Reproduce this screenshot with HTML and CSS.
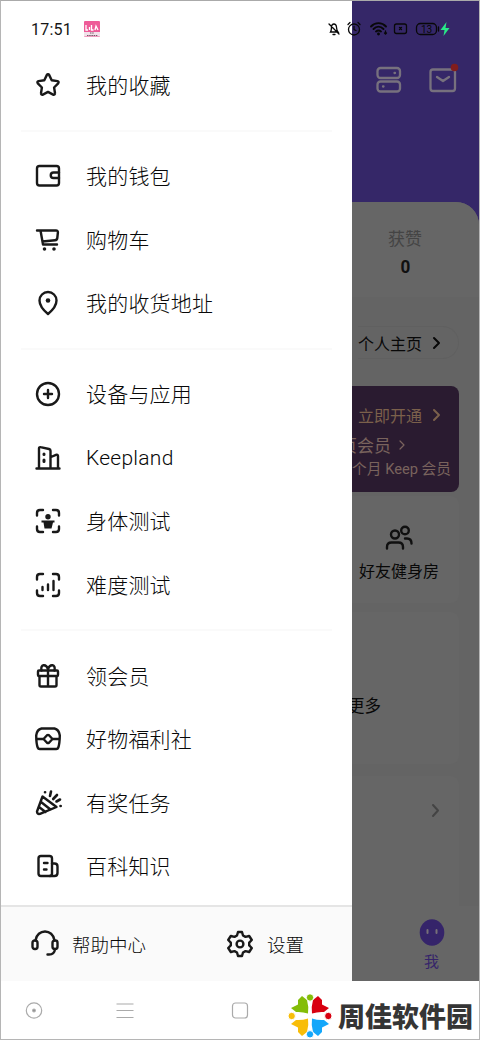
FILE: index.html
```html
<!DOCTYPE html>
<html lang="zh-CN">
<head>
<meta charset="utf-8">
<title>Keep</title>
<link rel="stylesheet" href="styles.css">
</head>
<body>
<div class="screen">
  <header class="status">
    <span class="clock">17:51</span>
    <svg class="app-badge" width="16" height="16" viewBox="0 0 16 16"><rect width="16" height="16" rx="1" fill="#ee5b98"/><path d="M0 11h16v4.500H0z" fill="#f1e1e9"/><path d="M2 4v5h2M5.500 6v3M7.500 4v5h2M11 9l1-4 2 4" fill="none" stroke="#fff" stroke-width="1.300"/><path d="M6 12h4M3 14.500h11" stroke="#765567" stroke-dasharray="1.500 .7"/></svg>
    <svg class="status-icons" width="128" height="18" viewBox="-2 0 128 18" fill="none" stroke="#080808" stroke-width="1.300" stroke-linecap="round">
      <path d="M1.500 12c1-1.500.8-3 1-5 .3-4 4.500-4 5 0 .2 2 .1 3.500 1.500 5zM0 4l10 10M4 14.500h2"/>
      <circle cx="25" cy="9.500" r="5.500"/><path d="M25 6.500v3l2 1M19 4.500l2-2M29 2.500l2 2"/>
      <path d="M42 6.500c4-4.500 11-4.500 15 0M44.500 9c3-3 7-3 10 0M47 11.500q2.500-2 5 0" stroke-width="1.900"/><circle cx="49.500" cy="14" r=".8" fill="#080808"/><path d="M56.500 11v3M55.500 13l1 1 1-1"/>
      <rect x="65.500" y="4" width="12" height="9.500" rx="2"/><path d="M70.500 7.500l2 2M72.500 7.500l-2 2"/>
      <rect x="87.500" y="3.500" width="20" height="11" rx="4"/><path d="M109.500 7v4"/>
      <text x="97.500" y="12.500" text-anchor="middle" class="battery-text">13</text>
      <path d="M117.500 2l-6 8h4l-1 6 6-8h-4z" fill="#28e887" stroke="none"/>
    </svg>
  </header>

  <main class="main">
    <aside class="drawer">
      <nav class="menu">
        <section class="group">
          <a class="row"><svg class="icon" viewBox="0 0 28 28"><path d="M14 3.200c.5 0 .9.200 1.100.7l2.600 5.300 5.800.9c1.100.2 1.500 1.400.7 2.200l-4.100 4.200.9 5.800c.2 1-.9 1.800-1.900 1.300L14 20.900l-5.100 2.700c-1 .5-2.100-.3-1.900-1.300l.9-5.800-4.100-4.200c-.8-.8-.4-2 .7-2.200l5.800-.9 2.600-5.300c.2-.5.600-.7 1.100-.7z"/></svg><span>我的收藏</span></a>
        </section>
        <section class="group">
          <a class="row"><svg class="icon" viewBox="0 0 28 28"><rect x="3" y="4" width="22" height="19.500" rx="2.500"/><path d="M25 10.500h-5.500a2.500 2.500 0 0 0 0 5.500H25"/></svg><span>我的钱包</span></a>
          <a class="row"><svg class="icon" viewBox="0 0 28 28"><path d="M3 4.500h3.500L9 18.500h14M6.500 4.500H22q2 0 1.900 2l-.6 5.500q-.2 2-2.200 2.200L8.500 15.500"/><circle cx="10.500" cy="23" r=".9" class="solid dot-mark"/><circle cx="20" cy="23" r=".9" class="solid dot-mark"/></svg><span>购物车</span></a>
          <a class="row"><svg class="icon" viewBox="0 0 28 28"><path d="M14 25C8 20 5.500 16 5.500 11.500a8.500 8.500 0 0 1 17 0C22.500 16 20 20 14 25z"/><circle cx="14" cy="11.500" r="2.300" class="solid"/></svg><span>我的收货地址</span></a>
        </section>
        <section class="group">
          <a class="row"><svg class="icon" viewBox="0 0 28 28"><circle cx="14" cy="14" r="11"/><path d="M10 14h8M14 10v8"/></svg><span>设备与应用</span></a>
          <a class="row latin"><svg class="icon" viewBox="0 0 28 28"><path d="M2.500 24.500h23M5 24V4.500c0-1 .6-1.600 1.500-1.300L15 5c1 .3 1.500.8 1.500 1.800V24M17 13l5-2.200c1-.4 2 .2 2 1.200v12"/><path d="M10 10v.5M10 16v1.500" stroke-width="3"/></svg><span>Keepland</span></a>
          <a class="row"><svg class="icon" viewBox="0 0 28 28"><path d="M3 8.500V6q0-3 3-3h3M19 3h3q3 0 3 3v2.500M25 19.500V22q0 3-3 3h-3M9 25H6q-3 0-3-3v-2.500"/><circle cx="14" cy="9.800" r="2.700" class="fill"/><path d="M7.500 13.500h13v2H19L17.500 21.500h-7L9.500 15.500h-2z" class="fill"/></svg><span>身体测试</span></a>
          <a class="row"><svg class="icon" viewBox="0 0 28 28"><path d="M3 8.500V6q0-3 3-3h3M19 3h3q3 0 3 3v2.500M25 19.500V22q0 3-3 3h-3M9 25H6q-3 0-3-3v-2.500M8.500 16v3M14 13.500V19M19.500 10v9"/></svg><span>难度测试</span></a>
        </section>
        <section class="group">
          <a class="row"><svg class="icon" viewBox="0 0 28 28"><rect x="4" y="8.500" width="20" height="5.500" rx="1"/><path d="M5.500 14.500V23q0 1.500 1.500 1.500h14q1.500 0 1.500-1.500v-8.500M14 8.500v16M7.500 8.500C6 2 12 1.500 14 7c2-5.500 8-5 6.500 1.500"/></svg><span>领会员</span></a>
          <a class="row"><svg class="icon" viewBox="0 0 28 28"><path d="M7.500 3.500h13q4.500 1 5.300 7-.1 8-1.500 12-.5 1.500-2 1.500H5.700q-1.500 0-2-1.500Q2.300 19 2.200 10.500q.7-6 5.300-7zM3 14h6.500M18.500 14H25M9.500 14l3.500-3.700q1-.8 2 0l3.500 3.700-3.500 3.700q-1 .8-2 0z"/></svg><span>好物福利社</span></a>
          <a class="row"><svg class="icon" viewBox="0 0 28 28"><path d="M8.500 7.500L3 22.500q0 3 3 2.300L22.500 18zM7 13l9.500 7.500M5 18l6.500 5"/><path d="M11 3.200h.1M17 2.500l-1 4.500M23 6l-3.800 4M26 10.500l-3.500 2M26.500 17h.2" stroke-width="2.600"/></svg><span>有奖任务</span></a>
          <a class="row"><svg class="icon" viewBox="0 0 28 28"><rect x="4.500" y="4" width="13.500" height="20" rx="2.500"/><path d="M18 11.500h2.500q3 0 3 3V21q0 3-3 3H16M10 11h3.500M10 17.500h2.500"/></svg><span>百科知识</span></a>
        </section>
      </nav>
      <footer class="tools">
        <a class="tool help"><svg class="icon" viewBox="0 0 28 28"><rect x="1.500" y="10.500" width="5" height="8.500" rx="2.200"/><rect x="21.500" y="10.500" width="5" height="8.500" rx="2.200"/><path d="M4.500 10.500C6-1.500 22-1.500 23.500 10.500M24 19q-.5 5.500-6 5.500h-1.500"/></svg>帮助中心</a>
        <a class="tool"><svg class="icon" viewBox="0 0 28 28"><path d="M12 2h4l1 3.500 2.500 1.400L23.200 6l2.600 4-2.600 2.600v2.800l2.600 2.600-2.600 4-3.700-.9-2.500 1.400L16 26h-4l-1-3.500-2.500-1.400-3.700.9-2.600-4 2.600-2.600v-2.800L2.200 10l2.600-4 3.700.9L11 5.500z"/><circle cx="14" cy="14" r="3.400"/></svg>设置</a>
      </footer>
    </aside>

    <div class="profile">
      <div class="hero">
        <svg width="28" height="30" viewBox="0 0 28 30" class="hero-icon"><rect x="2.500" y="3" width="22.500" height="10" rx="3"/><rect x="2.500" y="16.500" width="22.500" height="10" rx="3"/><path d="M19.500 8h.5M8 21.500h.5"/></svg>
        <svg width="32" height="36" viewBox="0 0 32 36" class="hero-icon"><rect x="3.500" y="7.500" width="24.500" height="21.500" rx="2.500"/><path d="M10 15l6 4 6-4"/><circle cx="27.500" cy="5.500" r="3.800" class="dot"/></svg>
      </div>
      <div class="sheet">
        <div class="stat"><span class="stat-label">获赞</span><b class="stat-value">0</b></div>
        <div class="home"><span>个人主页</span><svg class="chev" width="9" height="14" viewBox="0 0 9 14"><path d="M2 2l5 5-5 5"/></svg></div>
        <div class="vip">
          <div class="vip-open">立即开通<svg class="chev" width="9" height="14" viewBox="0 0 9 14"><path d="M2 2l5 5-5 5"/></svg></div>
          <div class="vip-name">页会员<svg class="chev thin" width="8" height="12" viewBox="0 0 8 12"><path d="M2 2l4 4-4 4"/></svg></div>
          <div class="vip-note">个月 Keep 会员</div>
        </div>
        <div class="friends">
          <svg width="30" height="28" viewBox="0 0 30 28"><circle cx="11" cy="10.500" r="4"/><circle cx="21" cy="6.500" r="3.800"/><path d="M3 24.500v-1.500q0-4.500 4.500-4.500h7q4.500 0 4.500 4.500v1.500M21 14.500h2q4.500 0 4.500 5"/></svg>
          <span>好友健身房</span>
        </div>
        <div class="more">更多</div>
        <div class="feed"><svg class="chev" width="9" height="15" viewBox="0 0 9 15"><path d="M2 2l5 5.500L2 13"/></svg></div>
        <div class="tab"><svg width="26" height="28" viewBox="0 0 26 28"><ellipse cx="13" cy="13.500" rx="12.300" ry="13.200" fill="#35246a"/><path d="M8.500 11v3M17.500 11v3" stroke="#777078" stroke-width="2" stroke-linecap="round"/></svg><span>我</span></div>
      </div>
    </div>
  </main>

  <footer class="sysnav">
    <svg class="nav-icon" width="18" height="18" viewBox="0 0 18 18"><circle cx="9" cy="9.500" r="7.700"/><circle cx="9" cy="9.500" r="1.300" fill="#888"/></svg>
    <svg class="nav-icon" width="18" height="18" viewBox="0 0 18 18"><path d="M.500 3h17M.500 9.500h17M.500 16.500h17"/></svg>
    <svg class="nav-icon" width="18" height="18" viewBox="0 0 18 18"><rect x="1.500" y="2" width="15" height="15" rx="3"/></svg>
  </footer>
  <div class="brand">
    <svg width="44" height="44" viewBox="0 0 44 44">
      <path d="M20 19.500q-6-2-12-1.500L3 14l7-3.500V6L14 2l5 4q2 7 1 13.500z" fill="#84bd08"/>
      <path d="M24 19.500q-1-6.500 1-13.500l5-4 4 4v4.500l7 3.500-5 4q-6-.5-12 1.500z" fill="#d80010"/>
      <path d="M20 24.500q-6 2-12 1.500l-5 4 7 3.500V38l4 4 5-4q2-7 1-13.500z" fill="#f8bd09"/>
      <path d="M24 24.500q-1 6.500 1 13.500l5 4 4-4v-4.500l7-3.500-5-4q-6 .5-12-1.500z" fill="#14a7fa"/>
      <g stroke="#fff"><circle cx="22" cy="3.500" r="3.700" fill="#84bd08"/><circle cx="40.300" cy="22" r="3.700" fill="#d80010"/><circle cx="3.700" cy="22" r="3.700" fill="#f8bd09"/><circle cx="22" cy="40.300" r="3.700" fill="#14a7fa"/></g>
    </svg>
    <span>周佳软件园</span>
  </div>
</div>
</body>
</html>
```
FILE: styles.css
```css
* { box-sizing: border-box; }
body { margin: 0; background: #fff; font-family: Roboto, "Noto Sans CJK SC", sans-serif; }
svg { display: block; flex: none; }
.screen { position: relative; width: 480px; height: 1040px; overflow: hidden; display: flex; flex-direction: column; border: 1px solid #b5b5b5; border-top-color: #aaa; }
.status { position: absolute; z-index: 2; top: 18px; left: 30px; right: 24px; height: 20px; display: flex; align-items: center; }
.clock { width: 53px; font-size: 16px; letter-spacing: .25px; color: #161616; }
.status-icons { margin-left: auto; }
.battery-text { font: 10px Roboto, sans-serif; fill: #080808; stroke: none; }
.main { display: flex; height: 980px; flex: none; }
.drawer { width: 351px; flex: none; display: flex; flex-direction: column; background: #fff; }
.menu { height: 904px; flex: none; padding-top: 52.500px; }
.group + .group { border-top: 2px solid #fafafa; margin: 12.500px 20px 0; padding-top: 13px; }
.group + .group .row { padding-left: 13px; }
.row { height: 63.500px; padding-left: 33px; display: flex; align-items: center; gap: 24px; font-size: 21px; letter-spacing: .2px; font-weight: 300; line-height: 30px; color: #080808; }
.row span { padding-top: 2px; }
.latin { letter-spacing: .25px; }
.latin span { padding-top: 0; }
.icon { width: 28px; height: 28px; fill: none; stroke: #191919; stroke-width: 2.400; stroke-linecap: round; stroke-linejoin: round; }
.icon .fill { fill: #191919; stroke: none; }
.icon .solid { fill: #191919; stroke: none; }
.icon .dot-mark { stroke: #191919; stroke-width: 1.800; }
.tools { height: 76px; border-top: 2px solid #e5e5e5; background: #fafafa; display: flex; align-items: center; padding-left: 30px; }
.tool { display: flex; align-items: center; gap: 13px; font-size: 18.500px; color: #080808; font-weight: 300; }
.help { width: 195px; }
.profile { flex: 1; min-width: 0; background: #352768; overflow: hidden; display: flex; flex-direction: column; }
.hero { height: 201px; flex: none; padding: 64px 20px 0 0; display: flex; justify-content: flex-end; align-items: flex-start; gap: 24px; }
.hero-icon { fill: none; stroke: #77717e; stroke-width: 2.300; stroke-linecap: round; stroke-linejoin: round; }
.hero .hero-icon:last-child { margin-top: -3px; }
.hero .dot { fill: #801d1d; stroke: none; }
.sheet { flex: 1; background: #646464; border-top-right-radius: 23px; overflow: hidden; padding-right: 20px; display: flex; flex-direction: column; align-items: flex-end; }
.stat { width: 128px; margin-right: -20px; height: 95px; background: #666; display: flex; flex-direction: column; align-items: center; padding: 25px 20px 0 0; }
.stat-label { font-size: 17px; line-height: 25px; color: #444; }
.stat-value { font: 700 19px/29px Roboto, sans-serif; transform: scaleX(.9); color: #101010; }
.home { margin-top: 29px; height: 33px; padding-right: 17px; border: 1px solid #606060; border-left: 0; border-radius: 0 17px 17px 0; display: flex; align-items: center; gap: 10px; font-size: 16px; color: #080808; white-space: nowrap; }
.chev { fill: none; stroke: currentColor; stroke-width: 2; stroke-linecap: round; stroke-linejoin: round; }
.vip { align-self: stretch; height: 106px; margin-top: 27px; padding: 16px 8px 0 0; border-radius: 0 8px 8px 0; background: #2a1b30; color: #79635d; display: flex; flex-direction: column; align-items: flex-end; white-space: nowrap; }
.vip > div { display: flex; flex: none; align-items: center; }
.vip-open { height: 26px; gap: 10px; padding-right: 10px; font-size: 16px; color: #7b604b; }
.vip-name { height: 33px; gap: 7px; padding-right: 45px; font-size: 17px; }
.thin { stroke-width: 1.200; }
.vip-note { height: 12px; font-size: 14.700px; }
.friends { height: 107px; margin-top: 4px; align-self: stretch; background: #666; border-radius: 0 8px 8px 0; display: flex; flex-direction: column; align-items: flex-end; padding: 28px 20px 0 0; font-size: 16px; line-height: 24px; white-space: nowrap; color: #080808; }
.friends svg { margin-right: 25px; margin-bottom: 8px; fill: none; stroke: #101010; stroke-width: 2.400; stroke-linecap: round; }
.more { align-self: stretch; height: 152px; margin-top: 9px; background: #666; border-radius: 0 8px 8px 0; padding: 83px 78px 0 0; display: flex; justify-content: flex-end; white-space: nowrap; font-size: 16.500px; line-height: 24px; color: #080808; }
.feed { align-self: stretch; height: 130px; margin-top: 12px; background: #666; border-radius: 0 8px 0 0; display: flex; justify-content: flex-end; padding: 27px 19px 0 0; color: #444; }
.tab { flex: 1; align-self: stretch; margin-right: -20px; padding: 13px 34px 0 0; background: #666; display: flex; flex-direction: column; align-items: flex-end; font-size: 15px; line-height: 22px; color: #35246a; }
.tab span { margin: 4px 6px 0 0; }
.sysnav { flex: 1; padding: 20px 0 0 24px; display: flex; align-items: flex-start; }
.nav-icon { fill: none; stroke: #aaa; stroke-width: 1.200; }
.nav-icon:nth-child(2) { margin-left: 73px; }
.nav-icon:nth-child(3) { margin-left: 97px; }
.brand { position: absolute; z-index: 3; left: 279px; top: 981px; width: 200px; height: 58px; box-shadow: 1px 1px 0 #fff; background: #fff; display: flex; align-items: center; gap: 6px; padding: 9px 0 0 8px; font: 900 27px/38px "Noto Sans CJK SC", sans-serif; color: #353535; white-space: nowrap; }
```
